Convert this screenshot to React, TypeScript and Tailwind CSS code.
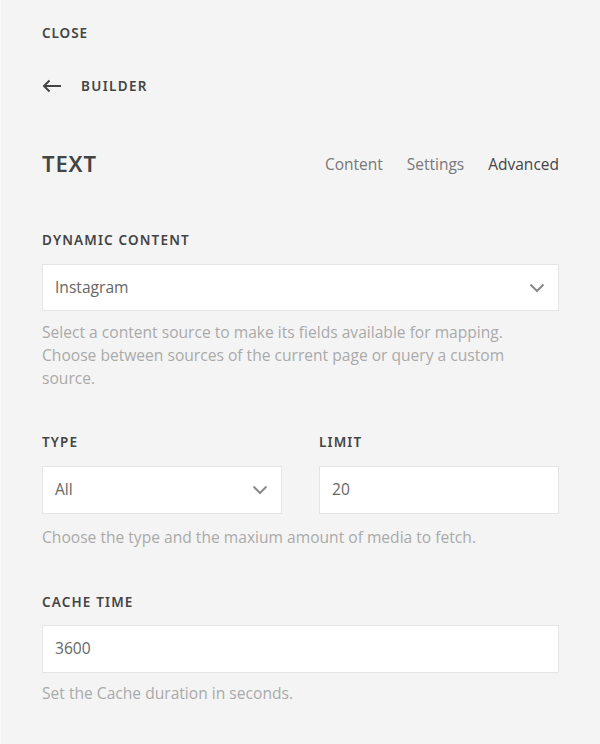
import React from "react";

const head = { fontFamily: '"Noto Sans", "Open Sans", sans-serif' };

function Chevron() {
  return (
    <svg width="16" height="10" viewBox="0 0 16 10" fill="none" className="shrink-0">
      <path d="M1.5 1.5 L8 8 L14.5 1.5" stroke="#8a8a8a" strokeWidth="2" />
    </svg>
  );
}

function Label({ children }: { children: React.ReactNode }) {
  return (
    <div
      className="text-[13.5px] leading-[20px] font-semibold uppercase tracking-[0.085em] text-[#444]"
      style={head}
    >
      {children}
    </div>
  );
}

function Field({ value, select, h = "h-[47px]" }: { value: string; select?: boolean; h?: string }) {
  return (
    <div
      className={`${h} bg-white border border-[#e5e5e5] flex items-center justify-between pl-[12px] pr-[13px] text-[15.6px] text-[#666]`}
    >
      <span>{value}</span>
      {select && <Chevron />}
    </div>
  );
}

export default function App() {
  return (
    <div
      className="w-[600px] h-[744px] bg-[#f4f4f4] border-l border-[#f9f9f9] pl-[41px] pr-[41px] pt-[23px]"
      style={{ fontFamily: '"Open Sans", sans-serif' }}
    >
      <div className="text-[13.5px] leading-[20px] font-semibold uppercase text-[#444] tracking-[0.07em]" style={head}>
        Close
      </div>

      <div className="mt-[33px] flex items-center h-[20px]">
        <svg width="20" height="14" viewBox="0 0 20 14" fill="none" className="mr-[19px]">
          <path d="M19 7 H2 M7.5 1.5 L2 7 L7.5 12.5" stroke="#444" strokeWidth="2" />
        </svg>
        <span className="text-[13.5px] leading-[20px] font-semibold uppercase text-[#444] tracking-[0.1em]" style={head}>
          Builder
        </span>
      </div>

      <div className="mt-[52px] flex items-center justify-between h-[30px]">
        <div className="text-[22px] leading-[30px] font-semibold text-[#444] tracking-[0.04em]" style={head}>
          TEXT
        </div>
        <div className="flex gap-[24px] text-[15.5px] leading-[30px] pt-[2px]">
          <span className="text-[#777]">Content</span>
          <span className="text-[#777]">Settings</span>
          <span className="text-[#444]">Advanced</span>
        </div>
      </div>

      <div className="mt-[52px]">
        <Label>Dynamic Content</Label>
      </div>
      <div className="mt-[14px]">
        <Field value="Instagram" select />
      </div>
      <p className="mt-[10px] text-[15.6px] leading-[23px] text-[#aaa] pr-[20px]">
        Select a content source to make its fields available for mapping. Choose between sources of the current
        page or query a custom source.
      </p>

      <div className="mt-[42px] grid grid-cols-2 gap-x-[37px]">
        <Label>Type</Label>
        <Label>Limit</Label>
        <div className="mt-[14px]">
          <Field value="All" select h="h-[48px]" />
        </div>
        <div className="mt-[14px]">
          <Field value="20" h="h-[48px]" />
        </div>
      </div>
      <p className="mt-[12px] text-[15.6px] leading-[23px] text-[#aaa]">
        Choose the type and the maxium amount of media to fetch.
      </p>

      <div className="mt-[43px]">
        <Label>Cache Time</Label>
      </div>
      <div className="mt-[13px]">
        <Field value="3600" h="h-[48px]" />
      </div>
      <p className="mt-[9px] text-[15.6px] leading-[23px] text-[#aaa]">Set the Cache duration in seconds.</p>
    </div>
  );
}
